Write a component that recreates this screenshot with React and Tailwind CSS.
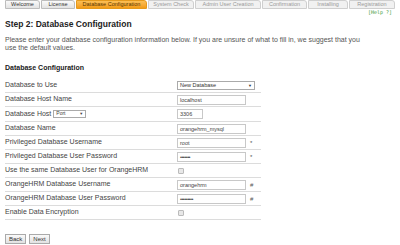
const tabs = [
  { label: "Welcome", w: "w-[35px]" },
  { label: "License", w: "w-[34px]" },
  { label: "Database Configuration", w: "w-[71px]", active: true },
  { label: "System Check", w: "w-[46px]", muted: true },
  { label: "Admin User Creation", w: "w-[66px]", muted: true },
  { label: "Confirmation", w: "w-[45px]", muted: true },
  { label: "Installing", w: "w-[40px]", muted: true },
  { label: "Registration", w: "w-[46px]", muted: true },
];

function TextInput({ value, width = "w-[69px]", password }) {
  return (
    <div
      className={`${width} h-[10px] border border-[#c8c8c8] bg-white px-[2px] text-[5.5px] leading-[8px] text-[#444] ${
        password ? "tracking-[-0.5px]" : ""
      }`}
    >
      {value}
    </div>
  );
}

function Row({ label, children, extra, tall }) {
  return (
    <div
      className={`flex items-center border-b border-[#dcdcdc] ${
        tall ? "h-[15px]" : "h-[14px]"
      }`}
    >
      <div className="w-[172px] shrink-0 text-[7px] text-[#444]">{label}</div>
      <div className="flex items-center">{children}</div>
      {extra && (
        <span className="ml-[4px] text-[6px] leading-none text-[#555]">
          {extra}
        </span>
      )}
    </div>
  );
}

function Checkbox() {
  return (
    <div className="ml-[1px] h-[6px] w-[6px] rounded-[1px] border border-[#bbb] bg-[#e8e8e8]" />
  );
}

export default function App() {
  return (
    <div className="h-[245px] w-[400px] overflow-hidden bg-white font-['Liberation_Sans',Arial,sans-serif]">
      {/* wizard tabs */}
      <div className="flex gap-[1px] pl-[5px]">
        {tabs.map((t) => (
          <div
            key={t.label}
            className={`${t.w} flex h-[9px] items-center justify-center rounded-tr-[3px] border text-[5.5px] leading-none ${
              t.active
                ? "border-[#e69a1c] bg-gradient-to-b from-[#fbbf55] to-[#f39c12] text-[#5a3800]"
                : t.muted
                ? "border-[#cfcfcf] bg-[#f1f1f1] text-[#9a9a9a]"
                : "border-[#bdbdbd] bg-gradient-to-b from-[#fafafa] to-[#e3e3e3] text-[#333]"
            }`}
          >
            {t.label}
          </div>
        ))}
      </div>

      <div className="flex justify-end pr-[8px] pt-[1px]">
        <span className="font-['DejaVu_Sans_Mono',monospace] text-[5px] leading-none text-[#3a9a3a]">
          [Help ?]
        </span>
      </div>

      <div className="px-[5px]">
        <h1 className="mt-[4px] text-[8.5px] font-bold leading-[10px] text-[#222]">
          Step 2: Database Configuration
        </h1>
        <p className="mt-[7px] text-[7px] leading-[8px] text-[#555]">
          Please enter your database configuration information below. If you
          are unsure of what to fill in, we suggest that you
          <br />
          use the default values.
        </p>

        <h2 className="mt-[11px] text-[7px] font-bold leading-[9px] text-[#222]">
          Database Configuration
        </h2>

        <div className="mt-[7px] w-[256px]">
          <Row label="Database to Use">
            <div className="flex h-[9px] w-[78px] items-center justify-between border border-[#aaa] bg-white px-[2px] text-[5.5px] text-[#333]">
              <span>New Database</span>
              <span className="text-[4px]">▼</span>
            </div>
          </Row>
          <Row label="Database Host Name">
            <TextInput value="localhost" />
          </Row>
          <Row
            tall
            label={
              <span className="flex items-center">
                Database Host
                <span className="ml-[2px] flex h-[8px] w-[33px] items-center justify-between border border-[#aaa] bg-white px-[2px] text-[5px]">
                  <span>Port</span>
                  <span className="text-[4px]">▼</span>
                </span>
              </span>
            }
          >
            <TextInput value="3306" width="w-[26px]" />
          </Row>
          <Row label="Database Name">
            <TextInput value="orangehrm_mysql" />
          </Row>
          <Row label="Privileged Database Username" extra="*">
            <TextInput value="root" />
          </Row>
          <Row label="Privileged Database User Password" extra="*">
            <TextInput value="•••••••" password />
          </Row>
          <Row label="Use the same Database User for OrangeHRM">
            <Checkbox />
          </Row>
          <Row label="OrangeHRM Database Username" extra="#">
            <TextInput value="orangehrm" />
          </Row>
          <Row label="OrangeHRM Database User Password" extra="#">
            <TextInput value="•••••••••" password />
          </Row>
          <Row label="Enable Data Encryption">
            <Checkbox />
          </Row>
        </div>

        <div className="mt-[14px] flex gap-[3px]">
          <button className="h-[10px] border border-[#aaa] bg-gradient-to-b from-[#fafafa] to-[#e2e2e2] px-[3px] text-[6px] leading-none text-[#333]">
            Back
          </button>
          <button className="h-[10px] border border-[#aaa] bg-gradient-to-b from-[#fafafa] to-[#e2e2e2] px-[3px] text-[6px] leading-none text-[#333]">
            Next
          </button>
        </div>
      </div>
    </div>
  );
}
